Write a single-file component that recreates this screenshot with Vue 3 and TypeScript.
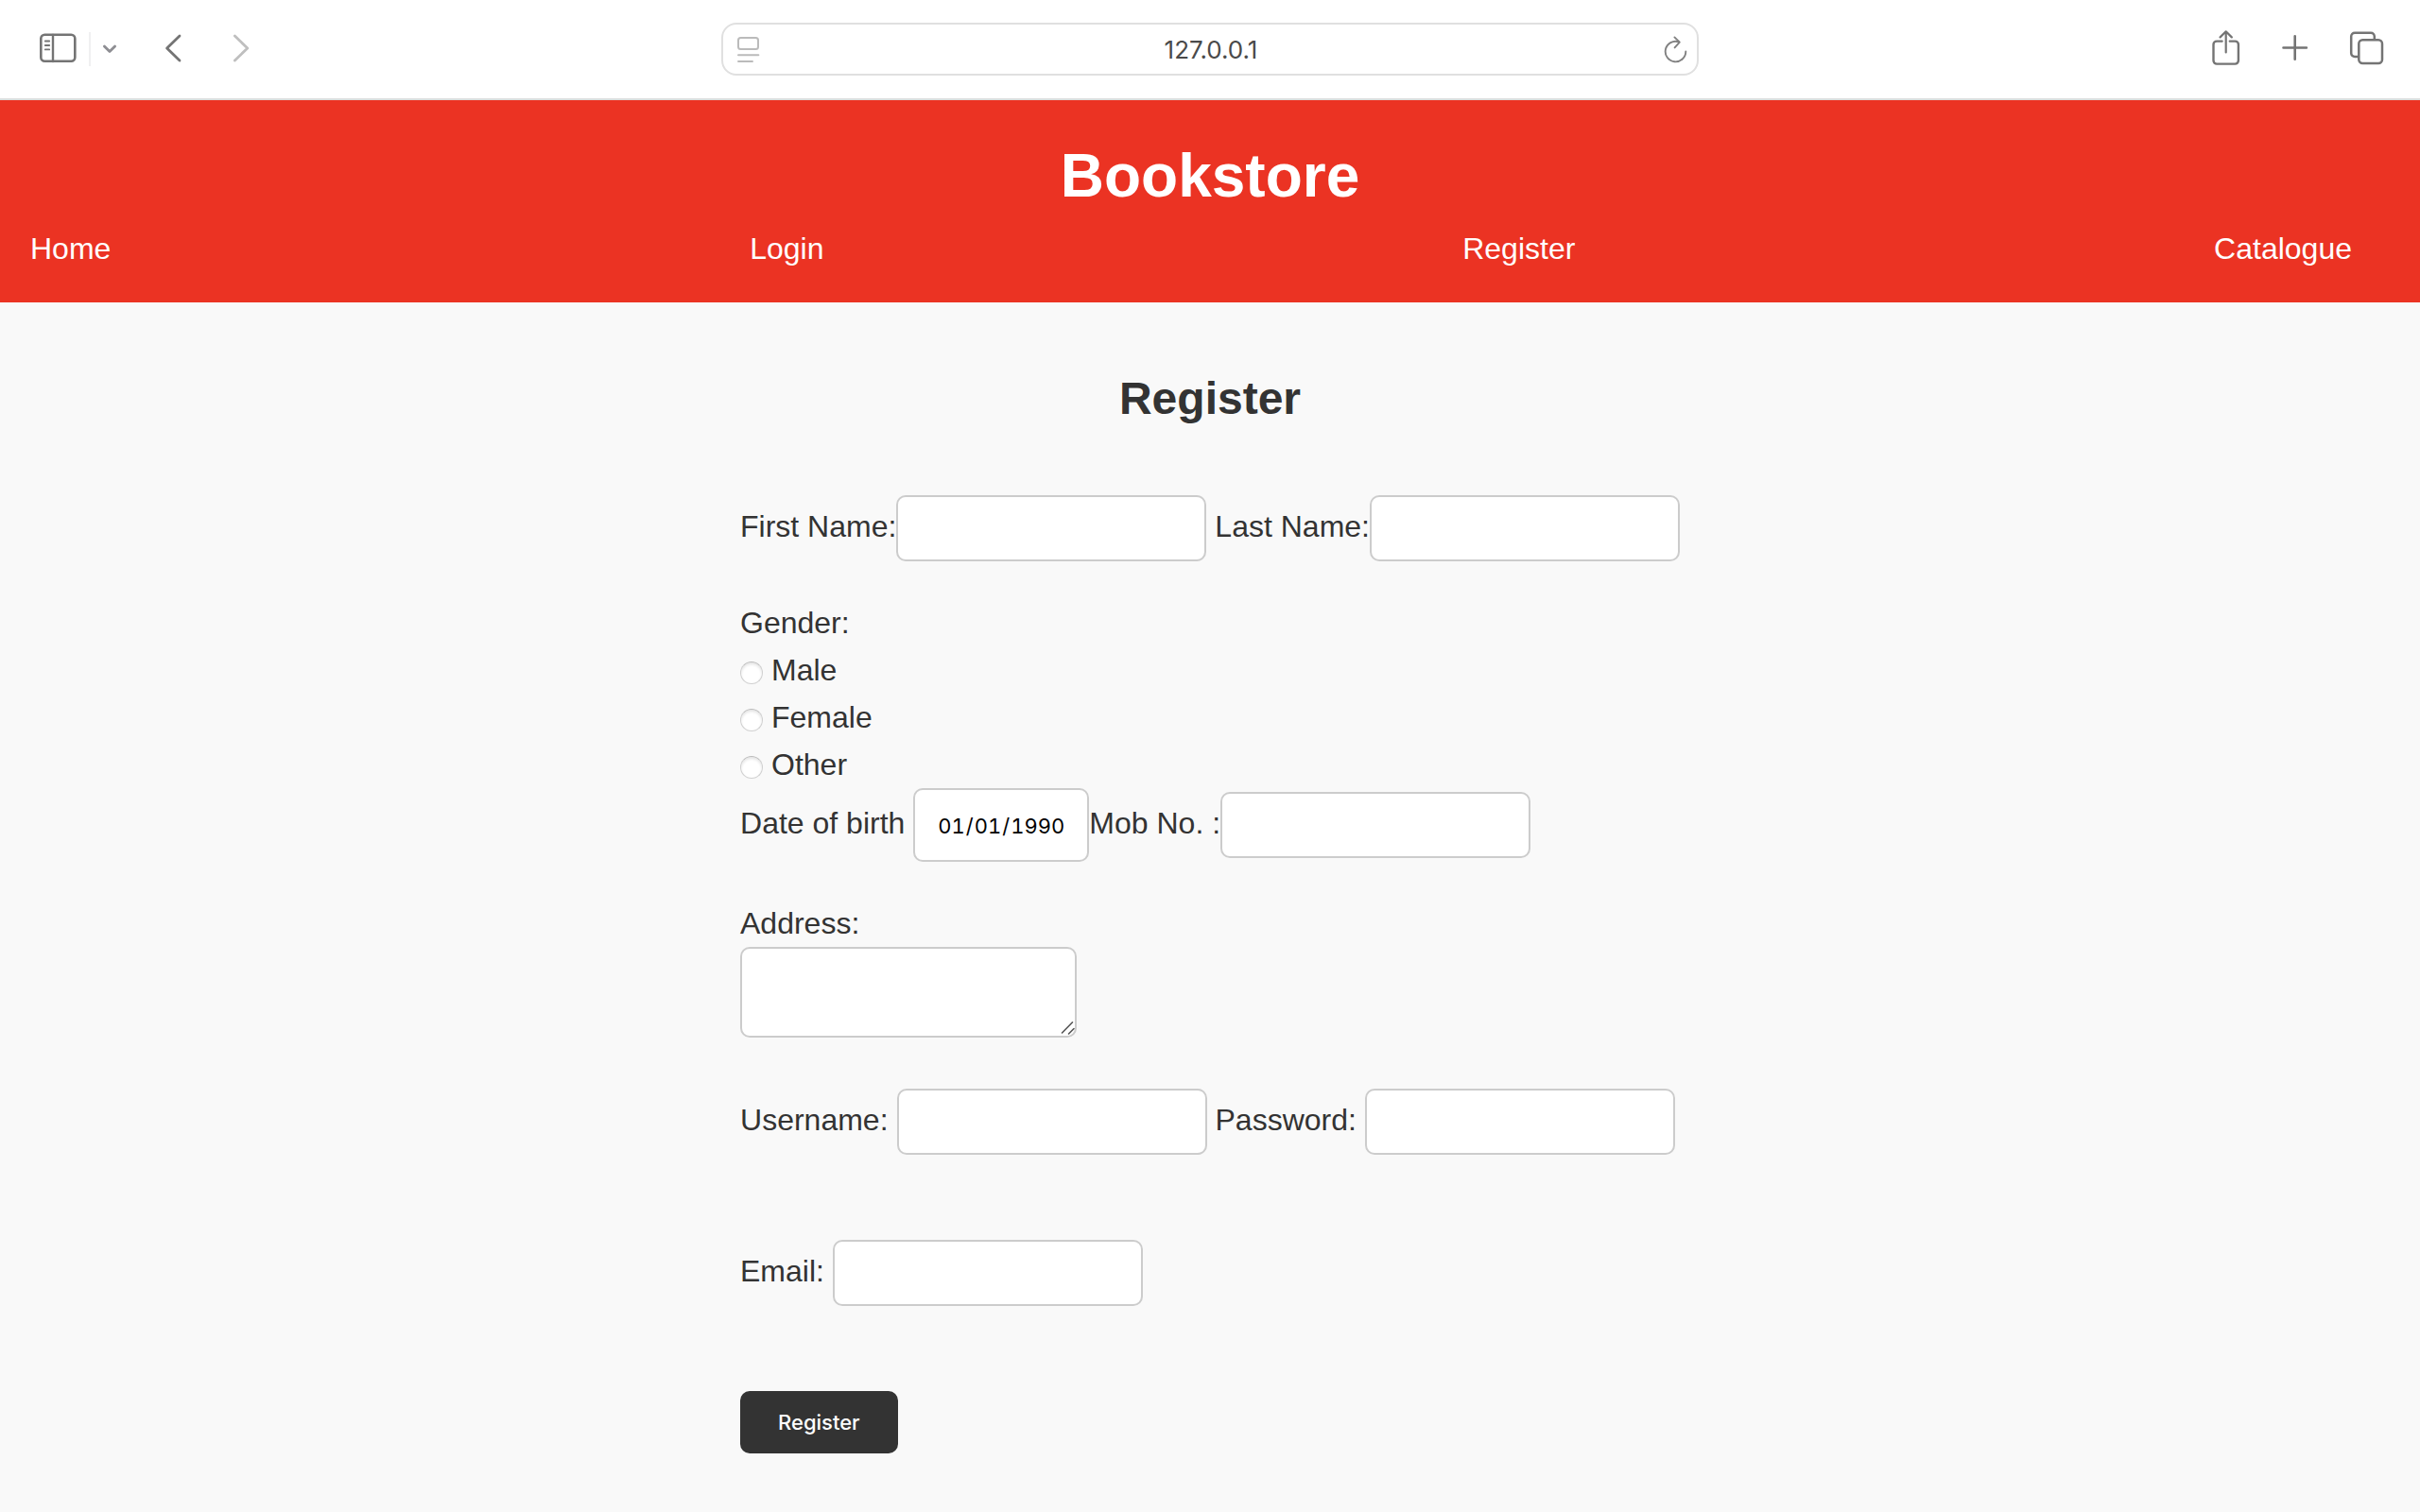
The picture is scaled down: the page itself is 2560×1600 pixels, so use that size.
<script setup lang="ts">
import { ref } from 'vue'

const address = ref('127.0.0.1')
const links: string[] = ['Home', 'Login', 'Register', 'Catalogue']
const genders: string[] = ['Male', 'Female', 'Other']
const gender = ref('')
const birthDate = ref('1990-01-01')
</script>

<template>
  <div class="browser">
    <div class="toolbar">
      <div class="tools">
        <button type="button" class="icon" aria-label="Show sidebar">
          <svg width="44" height="40" viewBox="0 0 44 40">
            <rect x="3.3" y="4.8" width="36" height="28" rx="4" stroke-width="2.6" />
            <path d="M16 5v28" stroke-width="2.4" />
            <path d="M7.8 11.5h4.4M7.8 16h4.4M7.8 20.4h4.4" stroke-width="1.8" />
          </svg>
        </button>
        <span class="divider"></span>
        <button type="button" class="icon menu" aria-label="Tab groups">
          <svg width="20" height="40" viewBox="0 0 20 40">
            <path d="M4.4 17l5.6 5.6L15.6 17" stroke-width="2.8" />
          </svg>
        </button>
        <button type="button" class="icon back" aria-label="Back">
          <svg width="24" height="40" viewBox="0 0 24 40">
            <path d="M18 6L4.6 19L18 32" stroke-width="2.8" />
          </svg>
        </button>
        <button type="button" class="icon forward" aria-label="Forward" disabled>
          <svg width="24" height="40" viewBox="0 0 24 40">
            <path d="M4.4 6L17.8 19L4.4 32" stroke-width="2.8" />
          </svg>
        </button>
      </div>

      <div class="address-bar">
        <button type="button" class="icon reader" aria-label="Reader">
          <svg width="32" height="40" viewBox="0 0 32 40">
            <rect x="8" y="8" width="21" height="12" rx="2.5" stroke-width="2" />
            <path d="M8 26.3h21.4M8 33h15" stroke-width="1.9" />
          </svg>
        </button>
        <input v-model="address" class="address" type="text" aria-label="Address" />
        <button type="button" class="icon reload" aria-label="Reload">
          <svg width="32" height="40" viewBox="0 0 32 40">
            <path d="M28.3 22.5A10.8 10.8 0 1 1 21 12.3" stroke-width="1.9" />
            <path d="M16.4 7.4L21.8 12.6L16.6 18.4" stroke-width="1.9" />
          </svg>
        </button>
      </div>

      <div class="tools end">
        <button type="button" class="icon" aria-label="Share">
          <svg width="36" height="40" viewBox="0 0 36 40">
            <path d="M12.6 11.6H7a3.5 3.5 0 0 0-3.5 3.5v17A3.5 3.5 0 0 0 7 35.6h19.4a3.5 3.5 0 0 0 3.5-3.5v-17a3.5 3.5 0 0 0-3.5-3.5h-5.6" stroke-width="2.4" />
            <path d="M16.7 23.5V1.8M10.6 7.4l6.1-6.1l6.1 6.1" stroke-width="2.2" />
          </svg>
        </button>
        <button type="button" class="icon" aria-label="New tab">
          <svg width="36" height="40" viewBox="0 0 36 40">
            <path d="M5.5 18.5h24.4M17.7 6.3v24.4" stroke-width="2.6" />
          </svg>
        </button>
        <button type="button" class="icon" aria-label="Tab overview">
          <svg width="40" height="40" viewBox="0 0 40 40">
            <path d="M12.5 28H9a3.8 3.8 0 0 1-3.8-3.8V6.6A3.8 3.8 0 0 1 9 2.8h17a3.8 3.8 0 0 1 3.8 3.8v3" stroke-width="2.5" />
            <rect x="13.3" y="10.3" width="24.7" height="24.7" rx="4" stroke-width="2.5" />
          </svg>
        </button>
      </div>
    </div>

    <header class="site-header">
      <h1>Bookstore</h1>
      <nav>
        <ul>
          <li v-for="link in links" :key="link"><a href="#">{{ link }}</a></li>
        </ul>
      </nav>
    </header>

    <main>
      <h2>Register</h2>
      <form @submit.prevent>
        <div class="row">
          <label for="first-name">First Name:</label>
          <input id="first-name" class="field" type="text" />
          <label for="last-name" class="spaced">Last Name:</label>
          <input id="last-name" class="field" type="text" />
        </div>

        <fieldset>
          <legend>Gender:</legend>
          <label v-for="option in genders" :key="option" class="choice">
            <input v-model="gender" type="radio" name="gender" :value="option" />
            {{ option }}
          </label>
        </fieldset>

        <div class="row">
          <label for="birth-date">Date of birth</label>
          <input id="birth-date" v-model="birthDate" class="field date spaced" type="date" />
          <label for="mobile">Mob No. :</label>
          <input id="mobile" class="field" type="tel" />
        </div>

        <div class="address-block">
          <label for="home-address">Address:</label>
          <div class="area">
            <textarea id="home-address" class="field"></textarea>
            <svg class="grip" width="20" height="20" viewBox="0 0 20 20" aria-hidden="true">
              <path d="M4.5 15L15.500 3.800M11.500 16L17 10.500" stroke-width="1.600" />
            </svg>
          </div>
        </div>

        <div class="row account">
          <label for="username">Username:</label>
          <input id="username" class="field spaced" type="text" />
          <label for="password" class="spaced">Password:</label>
          <input id="password" class="field spaced" type="password" />
        </div>

        <div class="row section">
          <label for="email">Email:</label>
          <input id="email" class="field spaced" type="email" />
        </div>

        <button type="submit" class="submit section">Register</button>
      </form>
    </main>
  </div>
</template>

<style>
body {
  background: #f9f9f9;
}
</style>

<style scoped>
* {
  box-sizing: border-box;
}

.browser {
  min-height: 100vh;
  background: #f9f9f9;
  color: #333;
  font-family: "Liberation Sans", Arial, sans-serif;
  font-size: 32px;
  line-height: 50px;
}

/* Browser toolbar */
.toolbar {
  display: grid;
  grid-template-columns: 1fr minmax(0, 1034px) 1fr;
  align-items: center;
  height: 106px;
  border-bottom: 2px solid #dbdddc;
  background: #fff;
}

.tools {
  display: flex;
  align-items: center;
  padding-left: 40px;
}

.tools.end {
  justify-content: flex-end;
  gap: 36px;
  padding: 0 38px 0 0;
}

.icon {
  display: flex;
  flex: none;
  padding: 0;
  border: 0;
  background: none;
  color: #747474;
}

svg {
  display: block;
  fill: none;
  stroke: currentColor;
  stroke-linecap: round;
  stroke-linejoin: round;
}

.divider {
  width: 2px;
  height: 36px;
  margin: 0 10px;
  background: #f0f0f1;
}

.menu {
  color: #8e8e93;
}

.back {
  margin-left: 46px;
}

.forward {
  margin-left: 48px;
  color: #bfbfbf;
}

.address-bar {
  display: flex;
  align-items: center;
  height: 56px;
  padding: 0 8px;
  border: 2px solid #e0e0e0;
  border-radius: 16px;
}

.reader {
  color: #bbb;
}

.reload {
  color: #808080;
}

.address {
  flex: 1;
  min-width: 0;
  padding: 0 0 0 2px;
  border: 0;
  background: none;
  color: #4a4a4a;
  font-family: Inter, sans-serif;
  font-size: 26px;
  text-align: center;
}

/* Site header */
.site-header {
  padding: 40px 0;
  background: #eb3323;
  color: #fff;
}

h1 {
  margin: 0 0 20px;
  font-size: 64px;
  line-height: 80px;
  text-align: center;
}

ul {
  display: flex;
  justify-content: space-between;
  margin: 0;
  padding: 0 32px;
  line-height: 34px;
  list-style: none;
}

li {
  margin-right: 40px;
}

a {
  color: inherit;
  text-decoration: none;
}

/* Registration form */
main {
  display: flex;
  flex-direction: column;
  align-items: center;
  padding: 72px 0;
}

h2 {
  margin: 0 0 72px;
  font-size: 48px;
  line-height: 60px;
}

.row {
  display: flex;
  align-items: baseline;
}

.spaced {
  margin-left: 9px;
}

.field {
  width: 328px;
  height: 70px;
  padding: 17px 16px 15px;
  border: 2px solid #ccc;
  border-radius: 10px;
  background: #fff;
  color: #000;
  font-family: Inter, sans-serif;
  font-size: 22px;
}

.date {
  width: 186px;
  height: 78px;
  padding: 2px 22px 0 23px;
  font-variant-numeric: tabular-nums;
}

.date::-webkit-calendar-picker-indicator {
  display: none;
}

fieldset {
  margin: 40px 0 0;
  padding: 0;
  border: 0;
}

legend {
  padding: 0;
}

.choice {
  display: flex;
  align-items: center;
  gap: 9px;
}

.choice input {
  width: 24px;
  height: 24px;
  margin: 6px 0 0;
  border: 1px solid #d0d0d0;
  border-top-color: #bbb;
  border-radius: 50%;
  background: #fff;
  box-shadow: inset 0 2px 3px #e4e4e4;
  appearance: none;
}

.choice input:checked {
  border: 8px solid #0a7aff;
}

.address-block {
  margin-top: 40px;
}

.area {
  position: relative;
  width: 356px;
}

textarea.field {
  display: block;
  width: 100%;
  height: 96px;
  resize: none;
}

.grip {
  position: absolute;
  right: 0;
  bottom: 0;
  color: #555;
}

.account {
  margin-top: 54px;
}

.section {
  margin-top: 90px;
}

.submit {
  display: block;
  height: 66px;
  padding: 0 40px;
  border: 0;
  border-radius: 10px;
  background: #333;
  color: #fff;
  font-family: Inter, sans-serif;
  font-size: 22px;
  font-weight: 500;
}
</style>
